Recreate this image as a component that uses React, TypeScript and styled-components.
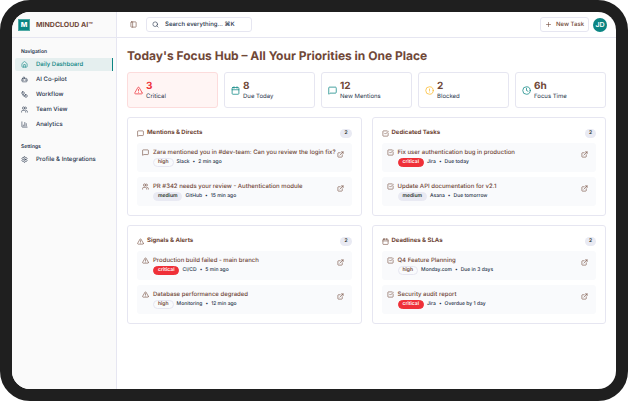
import React from "react";
import styled, { createGlobalStyle, css } from "styled-components";
import {
  Bot,
  Calendar,
  ChartColumn,
  CircleAlert,
  Clock,
  ExternalLink,
  House,
  MessageSquare,
  PanelLeft,
  Plus,
  Search,
  Settings,
  SquareCheckBig,
  TriangleAlert,
  Users,
  Workflow,
  type LucideIcon,
} from "lucide-react";

const color = {
  brown: "#704838",
  navy: "#26334a",
  teal: "#0b8583",
  line: "#e6e6f1",
  panel: "#f9fafc",
  red: "#ef3038",
  amber: "#fbb92a",
};

const GlobalStyle = createGlobalStyle`
  *, *::before, *::after { box-sizing: border-box; }
  body {
    margin: 0;
    background: #fff;
    font-family: Inter, "Liberation Sans", sans-serif;
    color: ${color.navy};
    text-rendering: geometricPrecision;
  }
  button, input { font: inherit; color: inherit; text-rendering: inherit; }
  h1, h2, h3, p, ul { margin: 0; padding: 0; }
  ul { list-style: none; }
  svg { flex: none; display: block; }
`;

const Device = styled.div`
  min-height: 100vh;
  display: flex;
  border: 12px solid #1f1f1f;
  border-radius: 30px;
  background: #1f1f1f;
`;

const Screen = styled.div`
  flex: 1;
  display: grid;
  grid-template-columns: 105px minmax(0, 1fr);
  overflow: hidden;
  border-radius: 18px;
  background: #fff;
`;

const Sidebar = styled.aside`
  background: #fafafa;
  border-right: 1px solid ${color.line};
`;

const Brand = styled.div`
  height: 26px;
  display: flex;
  align-items: center;
  gap: 6px;
  padding-left: 6px;
  border-bottom: 1px solid ${color.line};
  font-size: 7px;
  font-weight: 700;
  color: ${color.brown};
  white-space: nowrap;
`;

const Logo = styled.span`
  width: 12px;
  height: 12px;
  display: grid;
  place-items: center;
  border: 1px solid #4fa9a5;
  background: ${color.teal};
  color: #fff;
  font-size: 7px;
  line-height: 1;
  font-weight: 800;
`;

const NavGroup = styled.nav`
  padding: 10px 3px 2px;
`;

const NavTitle = styled.h2`
  padding-left: 6px;
  font-size: 5px;
  line-height: 8px;
  font-weight: 600;
  margin-bottom: 2px;
`;

const NavList = styled.ul`
  display: grid;
  gap: 2px;
`;

const NavLink = styled.a<{ $active?: boolean }>`
  height: 13px;
  display: flex;
  align-items: center;
  gap: 8px;
  padding-left: 6px;
  border-radius: 2px 0 0 2px;
  font-size: 6px;
  font-weight: 500;
  color: inherit;
  text-decoration: none;
  white-space: nowrap;
  ${(p) =>
    p.$active &&
    css`
      background: #e5efef;
      color: ${color.teal};
      border-right: 1px solid ${color.teal};
    `}
`;

const Content = styled.div`
  min-width: 0;
`;

const TopBar = styled.header`
  height: 26px;
  display: flex;
  align-items: center;
  padding: 0 9px 0 13px;
  border-bottom: 1px solid ${color.line};
`;

const IconButton = styled.button`
  display: grid;
  place-items: center;
  padding: 0;
  border: 0;
  background: none;
  color: ${color.brown};
  cursor: pointer;
`;

const SearchBox = styled.label`
  width: 106px;
  height: 15px;
  display: flex;
  align-items: center;
  gap: 6px;
  margin: 0 auto 0 9px;
  padding: 0 5px;
  border: 1px solid ${color.line};
  border-radius: 3px;
`;

const SearchInput = styled.input`
  flex: 1;
  min-width: 0;
  padding: 0;
  border: 0;
  outline: 0;
  background: none;
  font-size: 6px;
  font-weight: 500;
  &::placeholder { color: ${color.navy}; opacity: 1; }
`;

const NewTask = styled.button`
  height: 15px;
  display: flex;
  align-items: center;
  gap: 4px;
  padding: 0 4px;
  border: 1px solid ${color.line};
  border-radius: 3px;
  background: #fff;
  color: ${color.brown};
  font-size: 6px;
  font-weight: 500;
  cursor: pointer;
`;

const Avatar = styled.button`
  width: 14px;
  height: 14px;
  margin-left: 4px;
  padding: 0;
  border: 0;
  border-radius: 50%;
  background: ${color.teal};
  color: #fff;
  font-size: 7px;
  font-weight: 600;
  line-height: 14px;
`;

const Main = styled.main`
  display: grid;
  gap: 9px;
  padding: 10px;
`;

const PageTitle = styled.h1`
  font-size: 12px;
  line-height: 15px;
  font-weight: 700;
  color: ${color.brown};
`;

const Stats = styled.section`
  display: grid;
  grid-template-columns: repeat(5, minmax(0, 1fr));
  gap: 6px;
`;

const StatCard = styled.article<{ $alert?: boolean }>`
  height: 36px;
  display: flex;
  align-items: center;
  gap: 3px;
  padding: 1px 6px 0;
  border: 1px solid ${(p) => (p.$alert ? "#fcdcdc" : color.line)};
  border-radius: 3px;
  background: ${(p) => (p.$alert ? "#fff5f4" : "#fff")};
`;

const StatValue = styled.p<{ $alert?: boolean }>`
  font-size: 10px;
  line-height: 12px;
  font-weight: 700;
  color: ${(p) => (p.$alert ? color.red : color.brown)};
`;

const StatLabel = styled.p`
  font-size: 6px;
  line-height: 9px;
`;

const Panels = styled.section`
  display: grid;
  grid-template-columns: repeat(2, minmax(0, 1fr));
  gap: 9px 10px;
`;

const Panel = styled.article`
  padding: 9px;
  border: 1px solid ${color.line};
  border-radius: 3px;
`;

const PanelHead = styled.header`
  height: 12px;
  display: flex;
  align-items: center;
  gap: 3px;
  margin-bottom: 4px;
  color: ${color.brown};
`;

const PanelTitle = styled.h2`
  flex: 1;
  font-size: 6px;
  line-height: 10px;
  font-weight: 700;
`;

const Count = styled.span`
  padding: 0 4px;
  border-radius: 5px;
  background: #e9eaf3;
  color: #26301f;
  font-size: 5px;
  line-height: 9px;
  font-weight: 600;
`;

const Items = styled.ul`
  display: grid;
  grid-template-columns: minmax(0, 1fr);
  gap: 5px;
`;

const Item = styled.li`
  height: 29px;
  display: flex;
  align-items: flex-start;
  gap: 4px;
  padding: 5px 8px 0 5px;
  border-radius: 3px;
  background: ${color.panel};
  color: ${color.brown};
`;

const ItemIcon = styled.span`
  padding-top: 1px;
`;

const ItemBody = styled.div`
  flex: 1;
  min-width: 0;
`;

const ItemTitle = styled.h3`
  font-size: 6px;
  line-height: 9px;
  font-weight: 500;
  white-space: nowrap;
`;

const Meta = styled.p`
  display: flex;
  align-items: center;
  gap: 3px;
  font-size: 5px;
  line-height: 10px;
  font-weight: 500;
  color: ${color.navy};
  white-space: nowrap;
`;

type Level = "high" | "medium" | "critical";

const levelStyle = {
  high: css`
    border-color: ${color.line};
    color: ${color.brown};
  `,
  medium: css`
    border-color: #e9eaf3;
    background: #e9eaf3;
    color: #26301f;
  `,
  critical: css`
    border-color: ${color.red};
    background: ${color.red};
    color: #fff;
  `,
};

const Badge = styled.span<{ $level: Level }>`
  height: 9px;
  padding: 0 4px;
  border: 1px solid;
  border-radius: 5px;
  line-height: 7px;
  font-weight: 600;
  ${(p) => levelStyle[p.$level]}
`;

const OpenLink = styled.a`
  padding-top: 3px;
  color: inherit;
`;

const nav: { icon: LucideIcon; label: string }[] = [
  { icon: House, label: "Daily Dashboard" },
  { icon: Bot, label: "AI Co-pilot" },
  { icon: Workflow, label: "Workflow" },
  { icon: Users, label: "Team View" },
  { icon: ChartColumn, label: "Analytics" },
];

const stats: { icon: LucideIcon; value: string; label: string; tint: string; alert?: boolean }[] = [
  { icon: TriangleAlert, value: "3", label: "Critical", tint: color.red, alert: true },
  { icon: Calendar, value: "8", label: "Due Today", tint: color.teal },
  { icon: MessageSquare, value: "12", label: "New Mentions", tint: color.teal },
  { icon: CircleAlert, value: "2", label: "Blocked", tint: color.amber },
  { icon: Clock, value: "6h", label: "Focus Time", tint: color.teal },
];

type Entry = { icon: LucideIcon; title: string; level: Level; source: string; when: string };

const panels: { icon: LucideIcon; title: string; items: Entry[] }[] = [
  {
    icon: MessageSquare,
    title: "Mentions & Directs",
    items: [
      { icon: MessageSquare, title: "Zara mentioned you in #dev-team: Can you review the login fix?", level: "high", source: "Slack", when: "2 min ago" },
      { icon: Users, title: "PR #342 needs your review - Authentication module", level: "medium", source: "GitHub", when: "15 min ago" },
    ],
  },
  {
    icon: SquareCheckBig,
    title: "Dedicated Tasks",
    items: [
      { icon: SquareCheckBig, title: "Fix user authentication bug in production", level: "critical", source: "Jira", when: "Due today" },
      { icon: SquareCheckBig, title: "Update API documentation for v2.1", level: "medium", source: "Asana", when: "Due tomorrow" },
    ],
  },
  {
    icon: TriangleAlert,
    title: "Signals & Alerts",
    items: [
      { icon: TriangleAlert, title: "Production build failed - main branch", level: "critical", source: "CI/CD", when: "5 min ago" },
      { icon: TriangleAlert, title: "Database performance degraded", level: "high", source: "Monitoring", when: "12 min ago" },
    ],
  },
  {
    icon: Calendar,
    title: "Deadlines & SLAs",
    items: [
      { icon: SquareCheckBig, title: "Q4 Feature Planning", level: "high", source: "Monday.com", when: "Due in 3 days" },
      { icon: SquareCheckBig, title: "Security audit report", level: "critical", source: "Jira", when: "Overdue by 1 day" },
    ],
  },
];

export default function App() {
  return (
    <>
      <GlobalStyle />
      <Device>
        <Screen>
          <Sidebar>
            <Brand>
              <Logo>M</Logo>
              MINDCLOUD AI™
            </Brand>
            <NavGroup aria-label="Navigation">
              <NavTitle>Navigation</NavTitle>
              <NavList>
                {nav.map(({ icon: Icon, label }, i) => (
                  <li key={label}>
                    <NavLink href="#" $active={i === 0} aria-current={i === 0 ? "page" : undefined}>
                      <Icon size={7} />
                      {label}
                    </NavLink>
                  </li>
                ))}
              </NavList>
            </NavGroup>
            <NavGroup aria-label="Settings">
              <NavTitle>Settings</NavTitle>
              <NavList>
                <li>
                  <NavLink href="#">
                    <Settings size={7} />
                    Profile &amp; Integrations
                  </NavLink>
                </li>
              </NavList>
            </NavGroup>
          </Sidebar>
          <Content>
            <TopBar>
              <IconButton aria-label="Toggle sidebar">
                <PanelLeft size={7} />
              </IconButton>
              <SearchBox>
                <Search size={7} />
                <SearchInput type="text" aria-label="Search everything" placeholder="Search everything... ⌘K" />
              </SearchBox>
              <NewTask>
                <Plus size={7} />
                New Task
              </NewTask>
              <Avatar aria-label="Account JD">JD</Avatar>
            </TopBar>
            <Main>
              <PageTitle>Today's Focus Hub – All Your Priorities in One Place</PageTitle>
              <Stats>
                {stats.map(({ icon: Icon, value, label, tint, alert }) => (
                  <StatCard key={label} $alert={alert}>
                    <Icon size={9} color={tint} />
                    <div>
                      <StatValue $alert={alert}>{value}</StatValue>
                      <StatLabel>{label}</StatLabel>
                    </div>
                  </StatCard>
                ))}
              </Stats>
              <Panels>
                {panels.map(({ icon: HeadIcon, title, items }) => (
                  <Panel key={title}>
                    <PanelHead>
                      <HeadIcon size={7} />
                      <PanelTitle>{title}</PanelTitle>
                      <Count>{items.length}</Count>
                    </PanelHead>
                    <Items>
                      {items.map(({ icon: Icon, ...item }) => (
                        <Item key={item.title}>
                          <ItemIcon>
                            <Icon size={7} />
                          </ItemIcon>
                          <ItemBody>
                            <ItemTitle>{item.title}</ItemTitle>
                            <Meta>
                              <Badge $level={item.level}>{item.level}</Badge>
                              <span>{item.source}</span>
                              <span>•</span>
                              <span>{item.when}</span>
                            </Meta>
                          </ItemBody>
                          <OpenLink href="#" aria-label={`Open ${item.title}`}>
                            <ExternalLink size={7} />
                          </OpenLink>
                        </Item>
                      ))}
                    </Items>
                  </Panel>
                ))}
              </Panels>
            </Main>
          </Content>
        </Screen>
      </Device>
    </>
  );
}
